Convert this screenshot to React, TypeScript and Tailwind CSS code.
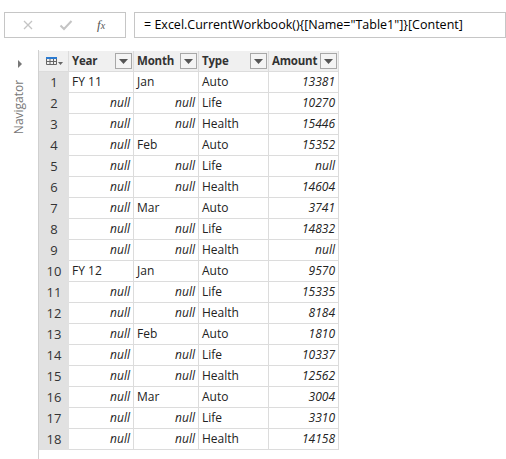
import React from 'react';

type Row = [string | null, string | null, string, number | null];

const rows: Row[] = [
  ['FY 11', 'Jan', 'Auto', 13381],
  [null, null, 'Life', 10270],
  [null, null, 'Health', 15446],
  [null, 'Feb', 'Auto', 15352],
  [null, null, 'Life', null],
  [null, null, 'Health', 14604],
  [null, 'Mar', 'Auto', 3741],
  [null, null, 'Life', 14832],
  [null, null, 'Health', null],
  ['FY 12', 'Jan', 'Auto', 9570],
  [null, null, 'Life', 15335],
  [null, null, 'Health', 8184],
  [null, 'Feb', 'Auto', 1810],
  [null, null, 'Life', 10337],
  [null, null, 'Health', 12562],
  [null, 'Mar', 'Auto', 3004],
  [null, null, 'Life', 3310],
  [null, null, 'Health', 14158],
];

const FilterButton = () => (
  <div className="w-[17px] h-[16px] shrink-0 border border-[#a8a8a8] bg-[#f4f4f4] flex items-center justify-center">
    <svg width="9" height="5" viewBox="0 0 9 5">
      <path d="M0 0h9L4.5 5z" fill="#555" />
    </svg>
  </div>
);

const HeaderCell = ({ label, w }: { label: string; w: string }) => (
  <div className={`${w} h-[20px] flex items-center justify-between pl-[3px] pr-[1px] border-r border-[#dcdcdc] bg-[#f0f0f0]`}>
    <span className="font-bold text-[11.5px] tracking-[-0.2px] text-[#333]">{label}</span>
    <FilterButton />
  </div>
);

const Null = () => <span className="italic">null</span>;

export default function App() {
  return (
    <div className="w-[506px] h-[459px] bg-white overflow-hidden text-[#222]" style={{ fontFamily: '"Open Sans", "Noto Sans", sans-serif' }}>
      {/* formula bar */}
      <div className="flex pt-[12px] pl-[4px] gap-[8px] h-[38px]">
        <div className="w-[122px] h-[26px] border border-[#c6c6c6] flex items-center">
          <svg width="12" height="12" viewBox="0 0 12 12" className="ml-[17px]">
            <path d="M2 2l8 8M10 2l-8 8" stroke="#c4c4c4" strokeWidth="1.3" />
          </svg>
          <svg width="14" height="12" viewBox="0 0 14 12" className="ml-[25px]">
            <path d="M1.5 6.5l3.5 3.5 7.5-8" stroke="#c4c4c4" strokeWidth="2" fill="none" />
          </svg>
          <span className="ml-[24px] italic text-[13px] text-[#555]" style={{ fontFamily: '"Liberation Serif", serif' }}>
            f<span className="text-[10px]">x</span>
          </span>
        </div>
        <div className="flex-1 h-[26px] border border-[#c6c6c6] flex items-center pl-[9px] text-[12.5px] text-black whitespace-nowrap">
          = Excel.CurrentWorkbook(){'{'}[Name="Table1"]{'}'}[Content]
        </div>
      </div>

      <div className="flex mt-[12px]">
        {/* navigator strip */}
        <div className="w-[39px] h-[409px] border-r border-[#d0d0d0] flex flex-col items-center">
          <svg width="6" height="8" viewBox="0 0 6 8" className="mt-[10px] ml-[2px]">
            <path d="M1 0l4 4-4 4z" fill="#777" />
          </svg>
          <div className="mt-[4px] h-[70px] w-[20px] flex items-center justify-center">
            <span className="-rotate-90 text-[12px] text-[#777] whitespace-nowrap">Navigator</span>
          </div>
        </div>

        {/* table */}
        <div className="flex flex-col mt-[1px]">
          <div className="flex border-b border-[#dcdcdc]">
            <div className="w-[30px] h-[20px] bg-[#f0f0f0] border-r border-[#dcdcdc] flex items-center justify-end pr-[5px] gap-[1px]">
              <svg width="11" height="8" viewBox="0 0 11 8">
                <rect x="0" y="0" width="11" height="2" fill="#2b7bd1" />
                <path d="M0.5 2v5.5h10V2M0.5 4.5h10M4 2v5.5M7.5 2v5.5" stroke="#666" strokeWidth="1" fill="none" />
              </svg>
              <svg width="5" height="3" viewBox="0 0 5 3" className="mt-[4px]">
                <path d="M0 0h5L2.5 3z" fill="#666" />
              </svg>
            </div>
            <HeaderCell label="Year" w="w-[65px]" />
            <HeaderCell label="Month" w="w-[65px]" />
            <HeaderCell label="Type" w="w-[70px]" />
            <HeaderCell label="Amount" w="w-[70px]" />
          </div>
          {rows.map((r, i) => (
            <div key={i} className="flex h-[21px] text-[12px]">
              <div className="w-[30px] bg-[#e1e1e1] flex items-center justify-center text-[13px] text-[#333]">
                {i + 1}
              </div>
              <div className={`w-[65px] border-r border-b border-[#dcdcdc] flex items-center px-[3px] ${r[0] ? 'justify-start' : 'justify-end'}`}>
                {r[0] ?? <Null />}
              </div>
              <div className={`w-[65px] border-r border-b border-[#dcdcdc] flex items-center px-[3px] ${r[1] ? 'justify-start' : 'justify-end'}`}>
                {r[1] ?? <Null />}
              </div>
              <div className="w-[70px] border-r border-b border-[#dcdcdc] flex items-center px-[3px]">
                {r[2]}
              </div>
              <div className="w-[70px] border-r border-b border-[#dcdcdc] flex items-center justify-end px-[3px] italic">
                {r[3] ?? 'null'}
              </div>
            </div>
          ))}
        </div>
      </div>
    </div>
  );
}
